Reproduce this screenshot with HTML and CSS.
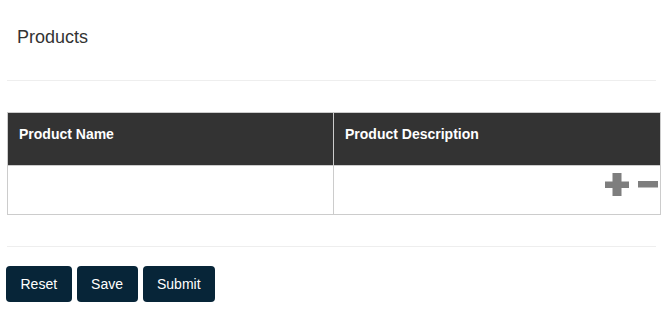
FILE: index.html
```html
<!DOCTYPE html>
<html>
<head>
    <meta charset="utf-8" />
    <title>Products</title>
    <link rel="stylesheet" href="styles.css">
</head>
<body>
    <div class="page">
        <div class="title">Products</div>
        <hr class="line" />
        <table class="grid">
            <thead>
                <tr>
                    <th class="col-name">Product Name</th>
                    <th>Product Description</th>
                </tr>
            </thead>
            <tbody>
                <tr>
                    <td></td>
                    <td class="ops">
                        <span class="icons">
                            <svg class="ico-plus" width="24" height="23" viewBox="0 0 24 23"><rect x="7.5" y="0" width="9" height="23" fill="#7e7e7e"/><rect x="0" y="8.5" width="24" height="6.5" fill="#7e7e7e"/></svg>
                            <svg class="ico-minus" width="20" height="7" viewBox="0 0 20 7"><rect x="0" y="0" width="20" height="6.5" fill="#7e7e7e"/></svg>
                        </span>
                    </td>
                </tr>
            </tbody>
        </table>
        <hr class="line" />
        <div class="actions">
            <button type="button" class="btn">Reset</button>
            <button type="button" class="btn">Save</button>
            <button type="button" class="btn">Submit</button>
        </div>
    </div>
</body>
</html>
```

FILE: styles.css
```css
html,body,div,p,table,th,td{margin:0;padding:0;}
*{box-sizing:border-box;}
body{font-family:"Liberation Sans",Arial,sans-serif;font-size:14px;color:#333;background:#fff;}
.page{padding-top:27px;}
.title{font-size:18px;line-height:20px;padding-left:17px;color:#333;}
.line{height:0;margin:33px 8px 31px 7px;border:0;border-top:1px solid #eeeeee;}
.grid + .line{margin-top:31px;margin-bottom:19px;}
.grid{width:654px;margin-left:7px;border-collapse:collapse;border:1px solid #ccc;table-layout:fixed;}
.grid th{background:#333;color:#fff;font-size:14px;font-weight:bold;line-height:20px;text-align:left;padding:11px 10px 21px 11px;border:1px solid #ccc;height:53px;}
.grid .col-name{width:326px;}
.grid td{height:49px;border:1px solid #ccc;vertical-align:top;}
.ops{text-align:right;padding:7px 2px 0 0;}
.icons{display:inline-flex;align-items:center;gap:9px;}
.icons svg{display:block;}
.actions{display:flex;gap:5px;padding-left:6px;}
.btn{height:36px;padding:0 14.5px;font-family:"Liberation Sans",Arial,sans-serif;font-size:14px;color:#fff;background:#072538;border:0;border-radius:4px;}
```
